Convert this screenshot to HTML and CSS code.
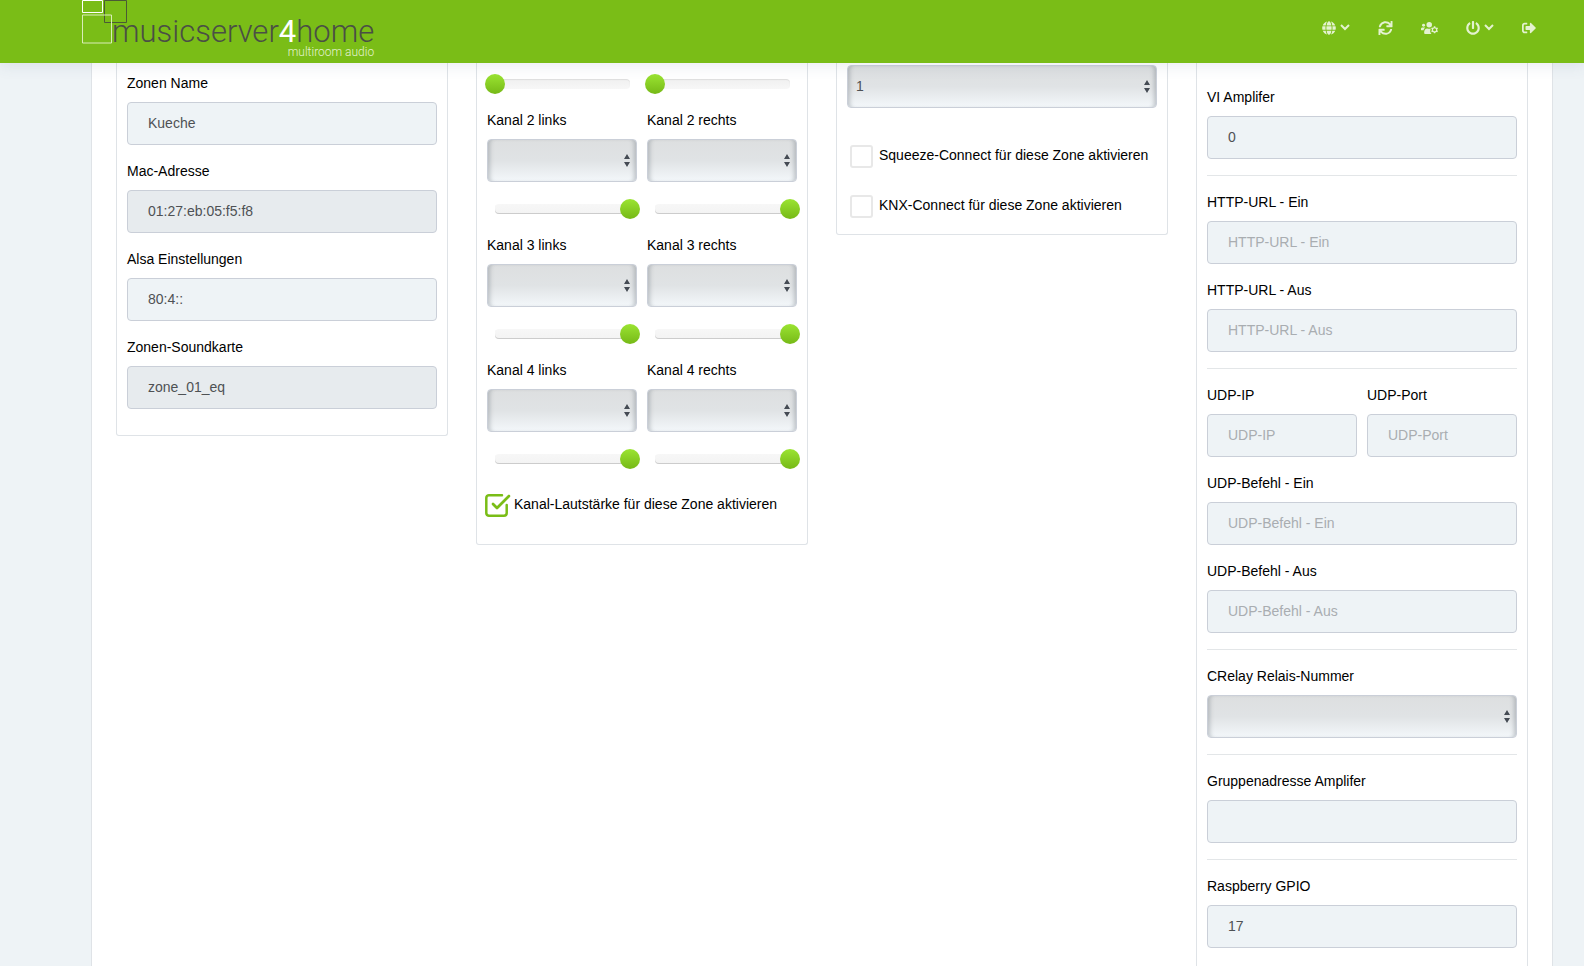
FILE: index.html
```
<!DOCTYPE html>
<html lang="de">

<head>
  <meta charset="UTF-8">
  <meta name="viewport" content="width=device-width, initial-scale=1.0">
  <title>musicserver4home</title>
  <link rel="stylesheet" href="styles.css">
</head>

<body>
  <header class="topbar">
    <a class="logo" href="#" aria-label="musicserver4home">
      <svg class="logo-mark" viewBox="0 0 46 44" fill="none" stroke-width="1">
        <path d="M22.500 0.500H44.500V22.500H22.500Z" stroke="#4a5a35"/>
        <path d="M0.500 0.500H20.500V12.500H0.500Z" stroke="#fff"/>
        <path d="M0.500 15H29.500V43H0.500Z" stroke="#d9edb8"/>
      </svg>
      <span class="logo-text">
        <span class="logo-name">musicserver<b>4</b>home</span>
        <span class="logo-sub">multiroom audio</span>
      </span>
    </a>
    <nav class="nav">
      <button type="button" aria-label="Sprache">
        <svg width="14" height="14" viewBox="0 0 496 512"><path d="M336.500 160C322 70.700 287.800 8 248 8s-74 62.700-88.500 152h177zM152 256c0 22.200 1.200 43.500 3.300 64h185.300c2.100-20.500 3.300-41.800 3.300-64s-1.200-43.500-3.300-64H155.300c-2.100 20.500-3.300 41.800-3.300 64zm324.700-96c-28.600-67.900-86.500-120.400-158-141.600 24.400 33.800 41.200 84.700 50 141.600h108zM177.200 18.400C105.800 39.600 47.800 92.100 19.300 160h108c8.700-56.900 25.500-107.800 49.900-141.600zM487.400 192H372.700c2.100 21 3.300 42.500 3.300 64s-1.200 43-3.300 64h114.600c5.500-20.500 8.600-41.800 8.600-64s-3.100-43.500-8.500-64zM120 256c0-21.500 1.200-43 3.300-64H8.600C3.200 212.500 0 233.800 0 256s3.200 43.500 8.600 64h114.600c-2-21-3.200-42.500-3.200-64zm39.500 96c14.500 89.300 48.700 152 88.500 152s74-62.700 88.500-152h-177zm159.300 141.600c71.400-21.200 129.400-73.700 158-141.600h-108c-8.800 56.900-25.600 107.800-50 141.600zM19.300 352c28.600 67.900 86.500 120.400 158 141.600-24.400-33.800-41.200-84.700-50-141.600h-108z"/></svg>
        <svg class="chevron" width="10" height="14" viewBox="0 0 10 14"><path d="M1 4L5 8L9 4"/></svg>
      </button>
      <button type="button" aria-label="Neu laden">
        <svg width="15" height="14" viewBox="0 0 512 512"><path d="M440.650 12.570l4 82.770A247.160 247.160 0 0 0 255.830 8C134.730 8 33.910 94.920 12.290 209.820A12 12 0 0 0 24.090 224h49.050a12 12 0 0 0 11.670-9.260 175.910 175.910 0 0 1 317-56.940l-101.460-4.860a12 12 0 0 0-12.570 12v47.410a12 12 0 0 0 12 12H500a12 12 0 0 0 12-12V12a12 12 0 0 0-12-12h-47.370a12 12 0 0 0-11.980 12.570zM255.830 432a175.610 175.610 0 0 1-146-77.800l101.800 4.870a12 12 0 0 0 12.570-12v-47.400a12 12 0 0 0-12-12H12a12 12 0 0 0-12 12V500a12 12 0 0 0 12 12h47.350a12 12 0 0 0 12-12.600l-4.150-82.570A247.170 247.170 0 0 0 255.830 504c121.110 0 221.930-86.920 243.550-201.820a12 12 0 0 0-11.800-14.180h-49.050a12 12 0 0 0-11.670 9.260A175.860 175.860 0 0 1 255.830 432z"/></svg>
      </button>
      <button type="button" aria-label="Benutzer">
        <svg width="17" height="14" viewBox="0 0 640 512">
          <circle cx="96" cy="150" r="56"/>
          <circle cx="310" cy="136" r="104"/>
          <path d="M0 320v-32c0-29 24-52 52-52h72c14 0 26 5 36 14-34 22-58 54-62 90H24c-14 0-24-8-24-20z"/>
          <path d="M118 436c0-86 36-160 120-160 40 16 92 18 130 0-34 70-30 150 26 208H166c-27 0-48-21-48-48z"/>
          <path fill-rule="evenodd" d="M484 192h54l10 42 24 14 42-13 26 46-31 30v28l31 30-26 46-42-13-24 14-10 42h-54l-10-42-24-14-42 13-26-46 31-30v-28l-31-30 26-46 42 13 24-14zM511 267a58 58 0 1 0 0 116 58 58 0 0 0 0-116z"/>
        </svg>
      </button>
      <button type="button" aria-label="Ein/Aus">
        <svg width="14" height="14" viewBox="0 0 512 512"><path d="M400 54.100c63 45 104 118.600 104 201.900 0 136.800-110.800 247.700-247.500 248C120 504.300 8.200 393 8 256.400 7.900 173.100 48.900 99.300 111.800 54.200c11.700-8.300 28-4.800 35 7.700L162.600 90c5.900 10.500 3.100 23.800-6.600 31-41.500 30.800-68 79.600-68 134.900-.1 92.300 74.500 168.100 168 168.100 91.600 0 168.600-74.200 168-169.100-.3-51.800-24.700-101.800-68.100-134-9.700-7.200-12.400-20.500-6.500-30.900l15.800-28.100c7-12.400 23.200-16.100 34.800-7.800zM296 264V24c0-13.300-10.700-24-24-24h-32c-13.300 0-24 10.700-24 24v240c0 13.300 10.700 24 24 24h32c13.300 0 24-10.700 24-24z"/></svg>
        <svg class="chevron" width="10" height="14" viewBox="0 0 10 14"><path d="M1 4L5 8L9 4"/></svg>
      </button>
      <button type="button" aria-label="Abmelden">
        <svg width="14" height="14" viewBox="0 0 512 512"><path d="M497 273L329 441c-15 15-41 4.500-41-17v-96H152c-13.300 0-24-10.700-24-24v-96c0-13.300 10.700-24 24-24h136V88c0-21.400 25.900-32 41-17l168 168c9.300 9.400 9.300 24.600 0 34zM192 436v-40c0-6.600-5.400-12-12-12H96c-17.700 0-32-14.300-32-32V160c0-17.700 14.300-32 32-32h84c6.600 0 12-5.400 12-12V76c0-6.600-5.400-12-12-12H96c-53 0-96 43-96 96v192c0 53 43 96 96 96h84c6.600 0 12-5.400 12-12z"/></svg>
      </button>
    </nav>
  </header>

  <main>
    <form class="panel">
      <section class="card">
        <div class="field">
          <label for="zoneName">Zonen Name</label>
          <input type="text" id="zoneName" value="Kueche">
        </div>
        <div class="field">
          <label for="mac">Mac-Adresse</label>
          <input type="text" id="mac" value="01:27:eb:05:f5:f8" readonly>
        </div>
        <div class="field">
          <label for="alsa">Alsa Einstellungen</label>
          <input type="text" id="alsa" value="80:4::">
        </div>
        <div class="field">
          <label for="soundcard">Zonen-Soundkarte</label>
          <input type="text" id="soundcard" value="zone_01_eq" readonly>
        </div>
      </section>

      <section class="card card-channels">
        <div class="columns">
          <div class="channel">
            <div class="slider"><input type="range" min="0" max="100" value="0" aria-label="Lautstärke Kanal 1 links"></div>
          </div>
          <div class="channel">
            <div class="slider"><input type="range" min="0" max="100" value="0" aria-label="Lautstärke Kanal 1 rechts"></div>
          </div>
          <div class="channel">
            <label for="ch2l">Kanal 2 links</label>
            <select id="ch2l"><option></option></select>
            <div class="slider full"><input type="range" min="0" max="100" value="100" aria-label="Lautstärke Kanal 2 links"></div>
          </div>
          <div class="channel">
            <label for="ch2r">Kanal 2 rechts</label>
            <select id="ch2r"><option></option></select>
            <div class="slider full"><input type="range" min="0" max="100" value="100" aria-label="Lautstärke Kanal 2 rechts"></div>
          </div>
          <div class="channel">
            <label for="ch3l">Kanal 3 links</label>
            <select id="ch3l"><option></option></select>
            <div class="slider full"><input type="range" min="0" max="100" value="100" aria-label="Lautstärke Kanal 3 links"></div>
          </div>
          <div class="channel">
            <label for="ch3r">Kanal 3 rechts</label>
            <select id="ch3r"><option></option></select>
            <div class="slider full"><input type="range" min="0" max="100" value="100" aria-label="Lautstärke Kanal 3 rechts"></div>
          </div>
          <div class="channel">
            <label for="ch4l">Kanal 4 links</label>
            <select id="ch4l"><option></option></select>
            <div class="slider full"><input type="range" min="0" max="100" value="100" aria-label="Lautstärke Kanal 4 links"></div>
          </div>
          <div class="channel">
            <label for="ch4r">Kanal 4 rechts</label>
            <select id="ch4r"><option></option></select>
            <div class="slider full"><input type="range" min="0" max="100" value="100" aria-label="Lautstärke Kanal 4 rechts"></div>
          </div>
        </div>
        <div class="checks">
          <div class="check">
            <input type="checkbox" id="channelVolume" checked>
            <label for="channelVolume">Kanal-Lautstärke für diese Zone aktivieren</label>
          </div>
        </div>
      </section>

      <section class="card card-connect">
        <select aria-label="Anzahl"><option>1</option></select>
        <div class="checks">
          <div class="check">
            <input type="checkbox" id="squeeze">
            <label for="squeeze">Squeeze-Connect für diese Zone aktivieren</label>
          </div>
          <div class="check">
            <input type="checkbox" id="knx">
            <label for="knx">KNX-Connect für diese Zone aktivieren</label>
          </div>
        </div>
      </section>

      <section class="card card-amp">
        <div class="field">
          <label for="viAmp">VI Amplifer</label>
          <input type="text" id="viAmp" value="0">
        </div>
        <hr>
        <div class="field">
          <label for="httpOn">HTTP-URL - Ein</label>
          <input type="text" id="httpOn" placeholder="HTTP-URL - Ein">
        </div>
        <div class="field">
          <label for="httpOff">HTTP-URL - Aus</label>
          <input type="text" id="httpOff" placeholder="HTTP-URL - Aus">
        </div>
        <hr>
        <div class="columns">
          <div class="field">
            <label for="udpIp">UDP-IP</label>
            <input type="text" id="udpIp" placeholder="UDP-IP">
          </div>
          <div class="field">
            <label for="udpPort">UDP-Port</label>
            <input type="text" id="udpPort" placeholder="UDP-Port">
          </div>
        </div>
        <div class="field">
          <label for="udpOn">UDP-Befehl - Ein</label>
          <input type="text" id="udpOn" placeholder="UDP-Befehl - Ein">
        </div>
        <div class="field">
          <label for="udpOff">UDP-Befehl - Aus</label>
          <input type="text" id="udpOff" placeholder="UDP-Befehl - Aus">
        </div>
        <hr>
        <div class="field">
          <label for="relay">CRelay Relais-Nummer</label>
          <select id="relay"><option></option></select>
        </div>
        <hr>
        <div class="field">
          <label for="groupAmp">Gruppenadresse Amplifer</label>
          <input type="text" id="groupAmp">
        </div>
        <hr>
        <div class="field">
          <label for="gpio">Raspberry GPIO</label>
          <input type="text" id="gpio" value="17">
        </div>
      </section>
    </form>
  </main>
</body>

</html>
```
FILE: styles.css
```
* {
  box-sizing: border-box;
}

body {
  margin: 0;
  min-height: 100vh;
  display: flex;
  flex-direction: column;
  background-color: #eef3f6;
  font-family: 'Liberation Sans', Arial, sans-serif;
  font-size: 14px;
  line-height: 20px;
  color: #000;
}

/* top bar */
.topbar {
  position: sticky;
  top: 0;
  z-index: 10;
  display: flex;
  justify-content: space-between;
  align-items: flex-start;
  height: 63px;
  padding: 0 48px 0 82px;
  background-color: #7abd17;
  box-shadow: 0 1px 15px 1px rgba(69, 90, 120, 0.12);
}

.logo {
  display: flex;
  text-decoration: none;
}

.logo-mark {
  width: 46px;
  height: 44px;
  margin-right: -16px;
}

.logo-text {
  display: flex;
  flex-direction: column;
  align-items: flex-end;
  padding-top: 18px;
  font-family: Roboto, sans-serif;
  font-weight: 300;
}

.logo-name {
  font-size: 31px;
  line-height: 28px;
  color: #4a4f45;
}

.logo-name b {
  font-weight: 400;
  color: #fff;
}

.logo-sub {
  font-size: 12px;
  line-height: 12px;
  color: #e4f2d0;
}

.nav {
  display: flex;
  align-items: center;
  gap: 28px;
  height: 55px;
}

.nav button {
  display: flex;
  align-items: center;
  gap: 4px;
  padding: 0;
  border: none;
  background: none;
  cursor: pointer;
}

.nav svg {
  fill: #e4f2d0;
}

.nav .chevron {
  fill: none;
  stroke: #e4f2d0;
  stroke-width: 2;
}

/* content */
main {
  flex: 1;
  display: flex;
  padding: 0 31px 0 91px;
}

.panel {
  flex: 1;
  display: grid;
  grid-template-columns: repeat(4, 1fr);
  align-items: start;
  gap: 28px;
  padding: 0 24px;
  background-color: #fff;
  border: 1px solid #dfe3e7;
  border-width: 0 1px;
}

.card {
  min-width: 0;
  padding: 10px;
  border: 1px solid #dfe3e7;
  border-top: none;
  border-radius: 0 0 3px 3px;
}

.card-channels {
  padding: 16px 10px 27px;
}

.card-connect {
  padding: 2px 10px 16px;
}

.card-amp {
  align-self: stretch;
  padding: 24px 10px 0;
  border-bottom: none;
  border-radius: 0;
}

.columns {
  display: grid;
  grid-template-columns: 1fr 1fr;
  column-gap: 10px;
}

.field {
  margin-bottom: 16px;
}

.field label,
.channel label {
  display: block;
  margin-bottom: 9px;
}

hr {
  margin: 16px 0;
  border: none;
  border-top: 1px solid #e3e6e8;
}

input[type="text"],
select {
  display: block;
  width: 100%;
  height: 43px;
  border: 1px solid #cacfd8;
  border-radius: 4px;
  font: inherit;
  color: #4e5154;
}

input[type="text"] {
  padding: 0 20px 2px;
  background-color: #eef3f6;
}

input[readonly] {
  background-color: #e7ebee;
}

input::placeholder {
  color: #a9adb1;
}

select {
  appearance: none;
  padding: 0 24px 2px 8px;
  background: url("data:image/svg+xml,%3Csvg xmlns='http://www.w3.org/2000/svg' width='6' height='13'%3E%3Cpath d='M3 0L6 5H0ZM3 13L6 8H0Z' fill='%23454b54'/%3E%3C/svg%3E") no-repeat right 6px center, linear-gradient(#dddfe0, #e0e3e5 50%, #f3f7fa);
  box-shadow: inset 5px 0 4px -3px rgba(80, 90, 100, 0.3), inset -5px 0 4px -3px rgba(80, 90, 100, 0.3);
}

/* volume sliders, the thumb is centred on the ends of the track */
.slider {
  display: flex;
  align-items: center;
  height: 10px;
  margin: 0 7px 21px 8px;
  border-radius: 4px;
  background: linear-gradient(#f0f0f0, #f7f7f7);
  box-shadow: inset 0 1px 1px rgba(0, 0, 0, 0.08);
}

.slider.full {
  margin-top: 22px;
  background: linear-gradient(#f7f7f7, #f3f3f3);
  box-shadow: inset 0 -1px 0 #ccc;
}

input[type="range"] {
  appearance: none;
  flex: 1 0 calc(100% + 20px);
  height: 20px;
  margin: 0 -10px;
  background: none;
}

input[type="range"]::-webkit-slider-thumb {
  appearance: none;
  width: 20px;
  height: 20px;
  border-radius: 50%;
  background: linear-gradient(#9be432, #76b917);
}

/* checkboxes */
.checks {
  display: flex;
  flex-direction: column;
  gap: 27px;
}

.card-channels .checks {
  margin: 9px 0 0 -2px;
}

.card-connect .checks {
  margin: 37px 0 0 3px;
}

.check {
  display: flex;
  align-items: flex-start;
  gap: 6px;
}

.check label {
  white-space: nowrap;
}

.check input {
  appearance: none;
  flex: none;
  width: 23px;
  height: 23px;
  margin: 0;
  border: 2px solid #e8e8e8;
  border-radius: 3px;
  background-color: #fff;
}

.check input:checked {
  width: 26px;
  margin-right: -3px;
  border: none;
  background: url("data:image/svg+xml,%3Csvg xmlns='http://www.w3.org/2000/svg' width='26' height='23' fill='none' stroke='%237abd17' stroke-width='2.500' stroke-linecap='round' stroke-linejoin='round'%3E%3Cpath d='M17 1.300H4Q1.300 1.300 1.300 4V19Q1.300 21.700 4 21.700H19Q21.700 21.700 21.700 19V11'/%3E%3Cpath d='M8 10L12 14L24 2' stroke-width='2.800'/%3E%3C/svg%3E") no-repeat;
}
```
